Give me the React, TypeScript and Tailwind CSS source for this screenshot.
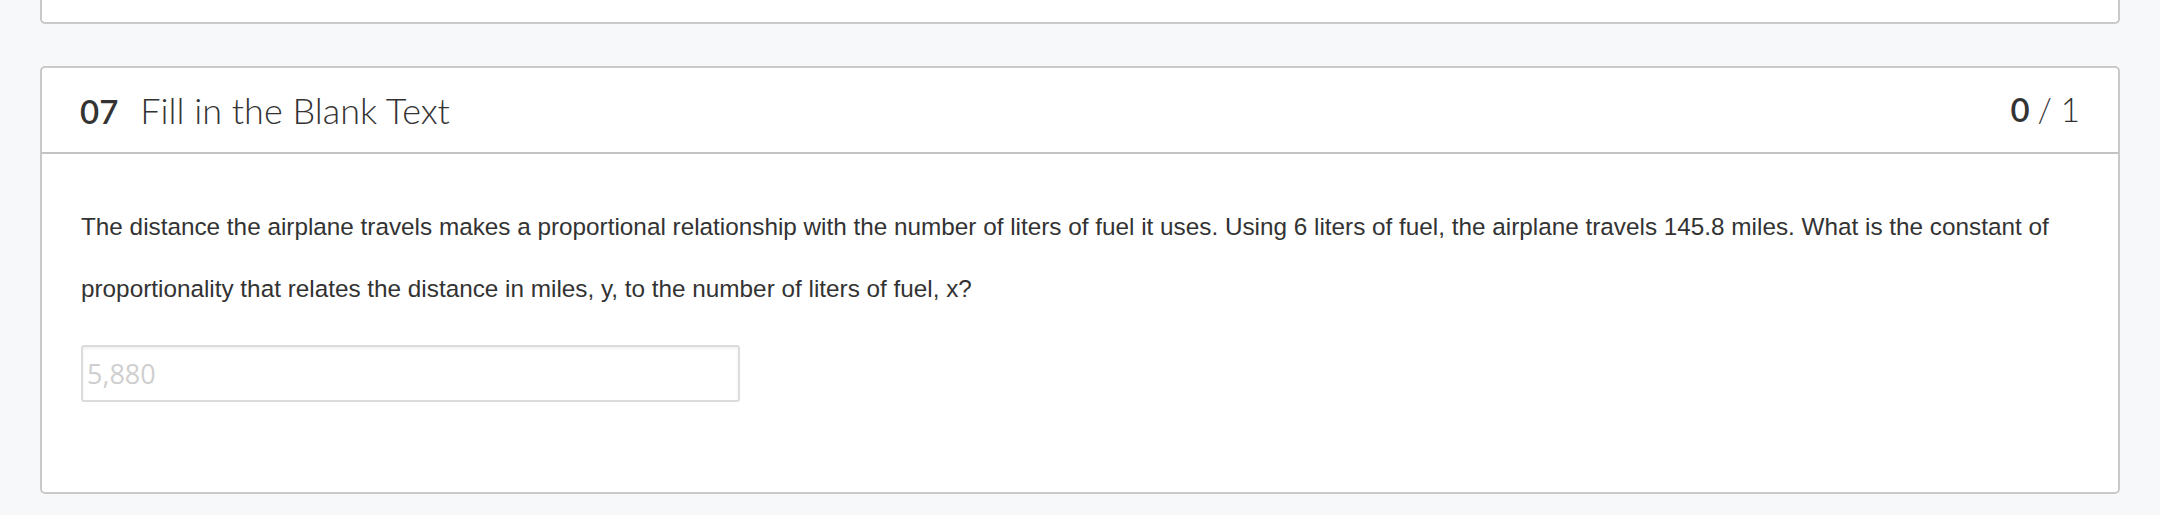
import React from 'react';

const QuestionCard = () => {
  return (
    <div className="mt-[42px] rounded-[5px] border-2 border-[#c9c9c9] bg-white">
      {/* header */}
      <div className="flex h-[86px] items-center justify-between border-b-2 border-[#c4c4c4] px-[38px] font-['Lato',sans-serif] text-[#333]">
        <div className="flex items-baseline">
          <span className="text-[33px] font-semibold">07</span>
          <span className="ml-[22px] text-[36px] font-light">Fill in the Blank Text</span>
        </div>
        <div className="flex items-baseline text-[33px]">
          <span className="font-semibold">0</span>
          <span className="ml-[8px] font-light">/ 1</span>
        </div>
      </div>

      {/* body */}
      <div className="px-[39px] pt-[42px] pb-[90px]">
        <p className="font-['Liberation_Sans',Arial,sans-serif] text-[24.3px] leading-[62px] text-[#333]">
          The distance the airplane travels makes a proportional relationship with the number of liters of fuel it uses. Using 6 liters of fuel, the airplane travels 145.8 miles. What is the constant of proportionality that relates the distance in miles, y, to the number of liters of fuel, x?
        </p>
        <input
          type="text"
          placeholder="5,880"
          className="mt-[25px] block h-[57px] w-[659px] rounded-[3px] border-2 border-[#dcdcdc] bg-white px-[4px] font-['Open_Sans',sans-serif] text-[27px] text-[#333] shadow-[inset_0_2px_3px_rgba(0,0,0,0.06)] outline-none placeholder:text-[#cfcfcf]"
        />
      </div>
    </div>
  );
};

const App = () => {
  return (
    <div className="min-h-screen bg-[#f7f8fa] px-[40px]">
      {/* previous question, cut off at top */}
      <div className="h-[24px] rounded-b-[5px] border-2 border-t-0 border-[#c9c9c9] bg-white" />
      <QuestionCard />
      <div className="h-[23px]" />
    </div>
  );
};

export default App;
